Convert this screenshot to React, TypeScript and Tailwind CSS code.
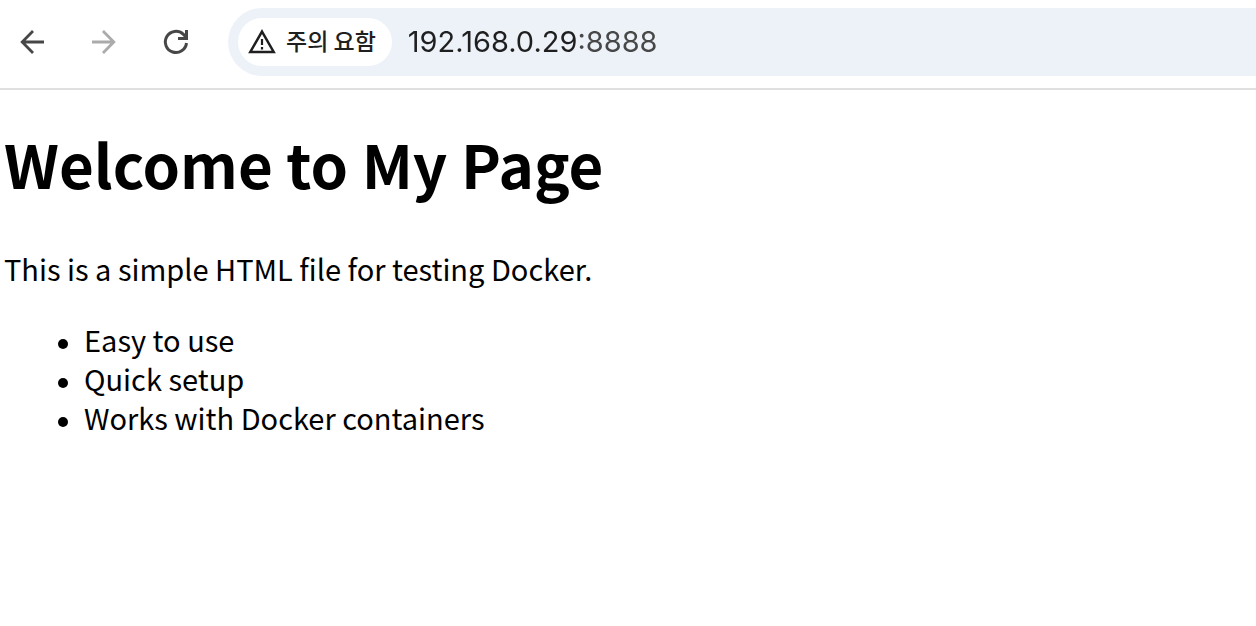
import type { ReactNode } from 'react';

const features = ['Easy to use', 'Quick setup', 'Works with Docker containers'];

function ToolbarButton({ label, disabled, children }: { label: string; disabled?: boolean; children: ReactNode }) {
  return (
    <button
      type="button"
      aria-label={label}
      disabled={disabled}
      className="flex h-8 w-8 items-center justify-center text-[#474747] disabled:text-[#ababab]"
    >
      <svg viewBox="0 0 32 32" className="h-8 w-8" fill="none" stroke="currentColor" strokeWidth="2.8">
        {children}
      </svg>
    </button>
  );
}

function Toolbar() {
  return (
    <header className="flex items-center border-b-2 border-[#e0e0e0] pt-2 pb-3 pl-4">
      <nav className="flex gap-10">
        <ToolbarButton label="Back">
          <path d="M28 16H6.500M17 5L6.200 16 17 27" />
        </ToolbarButton>
        <ToolbarButton label="Forward" disabled>
          <path d="M4 16h21.500M15 5l10.800 11L15 27" />
        </ToolbarButton>
        <ToolbarButton label="Reload">
          <path d="M26.500 17A10.600 10.600 0 1 1 23.200 8.200L27 12" strokeWidth="3" />
          <path d="M26.500 4v8.500H18" strokeWidth="3" />
        </ToolbarButton>
      </nav>
      <div className="ml-9 flex h-[68px] min-w-0 flex-1 items-center rounded-l-full bg-[#edf2f9] pl-2.5">
        <button type="button" className="flex h-12 shrink-0 items-center gap-2.5 rounded-full bg-white pr-4 pl-2.5">
          <svg viewBox="0 0 28 28" className="h-7 w-7" fill="none" stroke="#1f1f1f" strokeWidth="2.5">
            <path d="M14 3.600L25.700 24H2.300z" />
            <path d="M14 11v6M14 19v2.500" strokeWidth="2.2" />
          </svg>
          <span className="pb-1 font-['Noto_Sans_CJK_KR',sans-serif] text-[23px] leading-9 font-medium text-[#1f1f1f]">
            주의 요함
          </span>
        </button>
        {/* the port is dimmed with a hard gradient stop clipped to the text */}
        <input
          type="text"
          aria-label="Address"
          defaultValue="192.168.0.29:8888"
          className="ml-4 min-w-0 flex-1 bg-[linear-gradient(90deg,#1f1f1f_170px,#474747_170px)] bg-clip-text font-[Inter,sans-serif] text-[29px] leading-9 text-transparent outline-none"
        />
      </div>
    </header>
  );
}

export default function App() {
  return (
    <div className="min-h-screen bg-white">
      <Toolbar />
      <main className="px-1 pt-7 font-['Noto_Sans_CJK_KR',sans-serif] text-[29px] text-black">
        <h1 className="text-[60px] leading-[90px] font-bold">Welcome to My Page</h1>
        <p className="mt-10 leading-10">This is a simple HTML file for testing Docker.</p>
        <ul className="mt-8 pl-[54px] leading-[39px]">
          {features.map((feature) => (
            <li
              key={feature}
              className="flex items-center gap-4 before:mt-2 before:h-2.5 before:w-2.5 before:rounded-full before:bg-black"
            >
              {feature}
            </li>
          ))}
        </ul>
      </main>
    </div>
  );
}
